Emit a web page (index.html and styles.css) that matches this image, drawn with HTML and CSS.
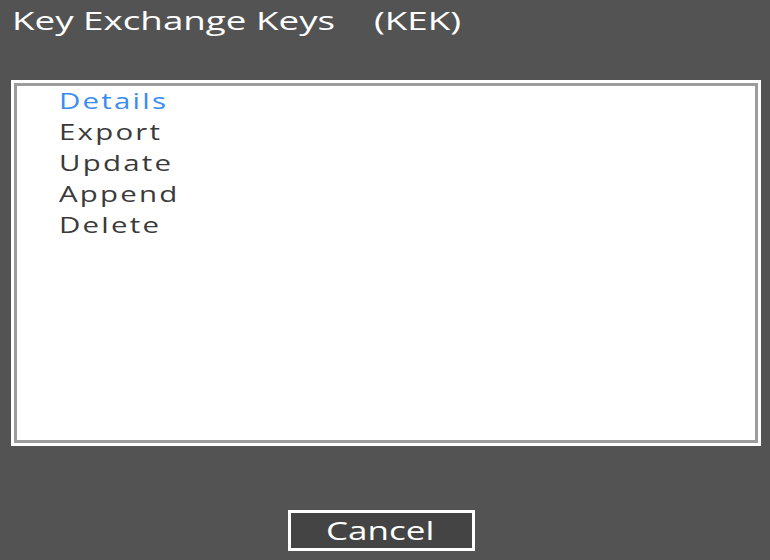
FILE: index.html
```html
<!DOCTYPE html>
<html>
<head>
  <title>Key Exchange Keys</title>
  <link rel="stylesheet" href="styles.css">
</head>
<body>
  <div class="screen">
    <div class="title">
      <span class="wide">Key Exchange Keys</span>
      <span class="wide">(KEK)</span>
    </div>

    <div class="panel">
      <div class="menu">
        <div class="item active"><span class="wide">Details</span></div>
        <div class="item"><span class="wide">Export</span></div>
        <div class="item"><span class="wide">Update</span></div>
        <div class="item"><span class="wide">Append</span></div>
        <div class="item"><span class="wide">Delete</span></div>
      </div>
    </div>

    <div class="footer">
      <button class="btn"><span class="wide">Cancel</span></button>
    </div>
  </div>
</body>
</html>
```

FILE: styles.css
```css
body {
  margin: 0;
  background: #535353;
  font-family: 'Open Sans', 'DejaVu Sans', sans-serif;
  color: #fff;
}

.screen {
  width: 770px;
  height: 560px;
  display: flex;
  flex-direction: column;
}

/* the source screen is stretched sideways, so text gets widened too */
.wide {
  display: inline-block;
  transform: scaleX(1.4);
  transform-origin: left center;
}

.title {
  height: 80px;
  padding-left: 12px;
  box-sizing: border-box;
  display: flex;
  gap: 142px;
  font-size: 25px;
  line-height: 40px;
}

.title .wide {
  transform: scaleX(1.47);
}

.panel {
  margin-left: 11px;
  width: 750px;
  height: 366px;
  box-sizing: border-box;
  background: #fff;
  padding: 3px;
}

.menu {
  height: 100%;
  box-sizing: border-box;
  border: 3px solid #9c9c9c;
  background: #fff;
  padding: 0 0 0 42px;
}

.item {
  font-size: 21px;
  line-height: 31px;
  letter-spacing: 1.6px;
  color: #3a3a3a;
}

.item.active {
  color: #3a8cf2;
}

.footer {
  padding-top: 64px;
  padding-left: 288px;
}

.btn {
  width: 187px;
  height: 41px;
  background: #444;
  border: 3px solid #fff;
  color: #fff;
  font-family: 'Open Sans', 'DejaVu Sans', sans-serif;
  font-size: 25px;
  padding: 0 0 0 35px;
  text-align: left;
  line-height: 33px;
}
```
